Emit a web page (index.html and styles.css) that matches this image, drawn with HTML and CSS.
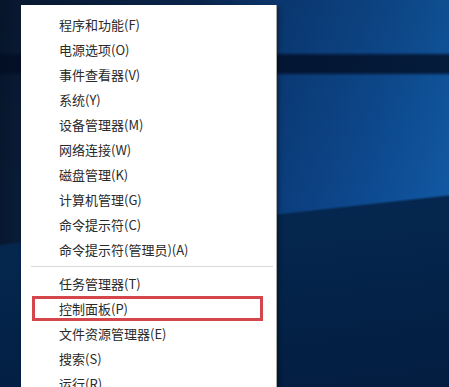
FILE: index.html
```html
<!DOCTYPE html>
<html lang="zh-CN">
<head>
    <meta charset="UTF-8">
    <meta name="viewport" content="width=device-width, initial-scale=1.0">
    <title>快速链接菜单</title>
    <link rel="stylesheet" href="styles.css">
</head>
<body>
    <div class="desktop">
        <ul class="menu">
            <li class="item">程序和功能(F)</li>
            <li class="item">电源选项(O)</li>
            <li class="item">事件查看器(V)</li>
            <li class="item">系统(Y)</li>
            <li class="item">设备管理器(M)</li>
            <li class="item">网络连接(W)</li>
            <li class="item">磁盘管理(K)</li>
            <li class="item">计算机管理(G)</li>
            <li class="item">命令提示符(C)</li>
            <li class="item">命令提示符(管理员)(A)</li>
            <li class="separator"></li>
            <li class="item">任务管理器(T)</li>
            <li class="item marked">控制面板(P)</li>
            <li class="item">文件资源管理器(E)</li>
            <li class="item">搜索(S)</li>
            <li class="item">运行(R)</li>
        </ul>
    </div>
</body>
</html>
```

FILE: styles.css
```css
html, body {
    margin: 0;
    padding: 0;
    height: 100%;
    overflow: hidden;
}

body {
    font-family: "Noto Sans CJK SC", "Noto Sans", sans-serif;
    background-color: #0a1f3f;
}

.desktop {
    height: 100%;
    padding-top: 5px;
    padding-left: 21px;
    box-sizing: border-box;
    background:
        linear-gradient(180deg, transparent 52px, rgba(2, 14, 36, 0.8) 56px, rgba(2, 14, 36, 0.8) 72px, transparent 76px),
        linear-gradient(173.7deg, transparent 242px, #05274f 245px, #031d40 100%),
        linear-gradient(180deg, rgba(0, 0, 0, 0.12) 0, transparent 200px),
        linear-gradient(90deg, #08172f 0, #0a1c38 21px, #0b2a56 45%, #0b3d7c 62%, #0e4c93 85%, #1159a4 100%);
}

.menu {
    list-style: none;
    margin: 0;
    padding: 7px 0 0 0;
    width: 256px;
    height: 400px;
    box-sizing: border-box;
    background-color: #ffffff;
    border-right: 1px solid #a9a9a9;
    box-shadow: 2px 2px 4px rgba(0, 0, 0, 0.35);
}

.item {
    position: relative;
    height: 25px;
    line-height: 25px;
    padding-left: 38px;
    font-size: 13px;
    color: #2a2a2a;
    white-space: nowrap;
}

.separator {
    height: 1px;
    margin: 4px 3px 4px 10px;
    background-color: #d9d9d9;
}

.marked::after {
    content: "";
    position: absolute;
    left: 11px;
    right: 13px;
    top: 0;
    bottom: 0;
    border: 3px solid #d5464c;
}
```
